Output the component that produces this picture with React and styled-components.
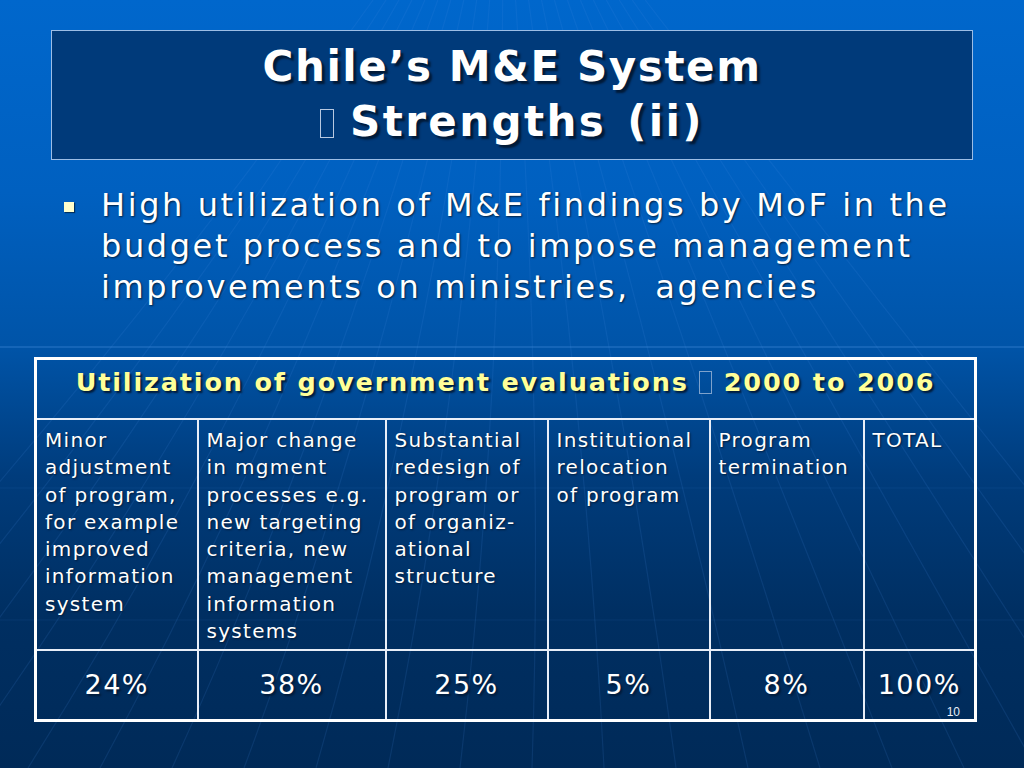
import React from "react"
import styled, { createGlobalStyle } from "styled-components"

const GlobalStyle = createGlobalStyle`
  html, body {
    margin: 0;
    padding: 0;
    background: #002a58;
  }
`

const Slide = styled.div`
  position: relative;
  width: 1024px;
  height: 768px;
  overflow: hidden;
  background: linear-gradient(
    to bottom,
    #0067cc 0%,
    #0060c0 25%,
    #0054a8 45%,
    #003c7c 62%,
    #002f62 80%,
    #002a58 100%
  );
  font-family: "DejaVu Sans", Verdana, sans-serif;
  color: #ffffff;
`

const Backdrop = styled.svg`
  position: absolute;
  inset: 0;
  pointer-events: none;
`

const Content = styled.div`
  position: relative;
  display: flex;
  flex-direction: column;
  padding-top: 30px;
`

const TitleBox = styled.div`
  margin-left: 51px;
  width: 920px;
  height: 126px;
  border: 1px solid #9cbde6;
  background: #003a7a;
  display: flex;
  flex-direction: column;
  align-items: center;
  justify-content: center;
  padding-bottom: 2px;
`

const TitleLine = styled.div`
  font-family: "DejaVu Sans", Tahoma, sans-serif;
  font-weight: bold;
  font-size: 42px;
  line-height: 55px;
  letter-spacing: ${props => (props.wide ? "2.4px" : "1.6px")};
  word-spacing: ${props => (props.wide ? "4px" : "0")};
  color: #ffffff;
  text-shadow: 3px 3px 2px #001a38;
`

const Tofu = styled.span`
  display: inline-block;
  width: 12px;
  height: 27px;
  border: 1.5px solid #b8c8e0;
  margin-right: 16px;
  vertical-align: -2px;
`

const BulletList = styled.ul`
  list-style: none;
  margin: 25px 0 0 0;
  padding: 0 0 0 64px;
`

const BulletItem = styled.li`
  display: grid;
  grid-template-columns: 37px 1fr;
  align-items: start;
  font-size: 32px;
  line-height: 41px;
  letter-spacing: 2.6px;
  white-space: pre;
  text-shadow: 1px 1px 2px #002040;
`

const BulletMark = styled.span`
  width: 10px;
  height: 10px;
  margin-top: 17px;
  background: #ffffcc;
  box-shadow: 1px 1px 1px #003060;
`

const Table = styled.table`
  margin: 49px 0 0 34px;
  width: 940px;
  border-collapse: collapse;
  border: 3px solid #ffffff;
  table-layout: fixed;
`

const HeadCell = styled.th`
  height: 44px;
  padding: 0 0 14px 0;
  border-bottom: 2px solid #e8eef8;
  font-size: 25.5px;
  letter-spacing: 1.85px;
  font-weight: bold;
  color: #ffff99;
  text-align: center;
  vertical-align: middle;
  white-space: nowrap;
  text-shadow: 2px 2px 2px #001a38;
`

const HeadTofu = styled.span`
  display: inline-block;
  width: 11px;
  height: 21px;
  border: 1.5px solid #7ea2cc;
  margin: 0 12px 0 10px;
  vertical-align: -3px;
`

const LabelCell = styled.td`
  height: 222px;
  padding: 7px 0 0 8px;
  border: 2px solid #e8eef8;
  font-size: 20px;
  line-height: 27.3px;
  letter-spacing: 1.3px;
  white-space: nowrap;
  vertical-align: top;
  text-align: left;
  text-shadow: 1px 1px 2px #001a38;
`

const ValueCell = styled.td`
  position: relative;
  height: 66px;
  padding: 0 0 2px 0;
  border: 2px solid #e8eef8;
  font-size: 27px;
  letter-spacing: 1.5px;
  text-align: center;
  vertical-align: middle;
  text-shadow: 2px 2px 2px #001a38;
`

const PageNumber = styled.span`
  position: absolute;
  right: 14px;
  bottom: 0px;
  font-family: "Liberation Sans", Arial, sans-serif;
  font-size: 12px;
  line-height: 14px;
  letter-spacing: 0;
  color: #e8eef8;
  text-shadow: none;
`

const columns = [
  { width: 162, value: "24%", lines: ["Minor", "adjustment", "of program,", "for example", "improved", "information", "system"] },
  { width: 188, value: "38%", lines: ["Major change", "in mgment", "processes e.g.", "new targeting", "criteria, new", "management", "information", "systems"] },
  { width: 162, value: "25%", lines: ["Substantial", "redesign of", "program or", "of organiz-", "ational", "structure"] },
  { width: 162, value: "5%", lines: ["Institutional", "relocation", "of program"] },
  { width: 154, value: "8%", lines: ["Program", "termination"] },
  { width: 112, value: "100%", lines: ["TOTAL"] },
]

const bulletLines = [
  "High utilization of M&E findings by MoF in the",
  "budget process and to impose management",
  "improvements on ministries,  agencies",
]

const rays = Array.from({ length: 22 }, (_, i) => {
  const bottomX = -260 + i * 72
  const topX = 512 + (bottomX - 512) * 0.18
  return { topX, bottomX }
})

const App = () => {
  return (
    <>
      <GlobalStyle />
      <Slide>
        <Backdrop width="1024" height="768" viewBox="0 0 1024 768">
          {rays.map((r, i) => (
            <path
              key={i}
              d={`M${r.topX} 0 Q${(r.topX + r.bottomX) / 2 + 20} 420 ${r.bottomX} 768`}
              stroke="#4a8ee0"
              strokeOpacity="0.14"
              strokeWidth="1.2"
              fill="none"
            />
          ))}
          <line x1="0" y1="347" x2="1024" y2="347" stroke="#3d86d8" strokeOpacity="0.35" strokeWidth="2" />
          <line x1="0" y1="488" x2="1024" y2="488" stroke="#3d86d8" strokeOpacity="0.12" strokeWidth="1" />
          <line x1="0" y1="620" x2="1024" y2="620" stroke="#3d86d8" strokeOpacity="0.1" strokeWidth="1" />
        </Backdrop>
        <Content>
          <TitleBox>
            <TitleLine>Chile’s M&amp;E System</TitleLine>
            <TitleLine wide>
              <Tofu />
              Strengths (ii)
            </TitleLine>
          </TitleBox>

          <BulletList>
            <BulletItem>
              <BulletMark />
              <span>
                {bulletLines.map((l, i) => (
                  <div key={i}>{l}</div>
                ))}
              </span>
            </BulletItem>
          </BulletList>

          <Table>
            <colgroup>
              {columns.map((c, i) => (
                <col key={i} style={{ width: c.width }} />
              ))}
            </colgroup>
            <thead>
              <tr>
                <HeadCell colSpan={6}>
                  Utilization of government evaluations
                  <HeadTofu />
                  2000 to 2006
                </HeadCell>
              </tr>
            </thead>
            <tbody>
              <tr>
                {columns.map((c, i) => (
                  <LabelCell key={i}>
                    {c.lines.map((l, j) => (
                      <div key={j}>{l}</div>
                    ))}
                  </LabelCell>
                ))}
              </tr>
              <tr>
                {columns.map((c, i) => (
                  <ValueCell key={i}>
                    {c.value}
                    {i === columns.length - 1 && <PageNumber>10</PageNumber>}
                  </ValueCell>
                ))}
              </tr>
            </tbody>
          </Table>
        </Content>
      </Slide>
    </>
  )
}

export default App
